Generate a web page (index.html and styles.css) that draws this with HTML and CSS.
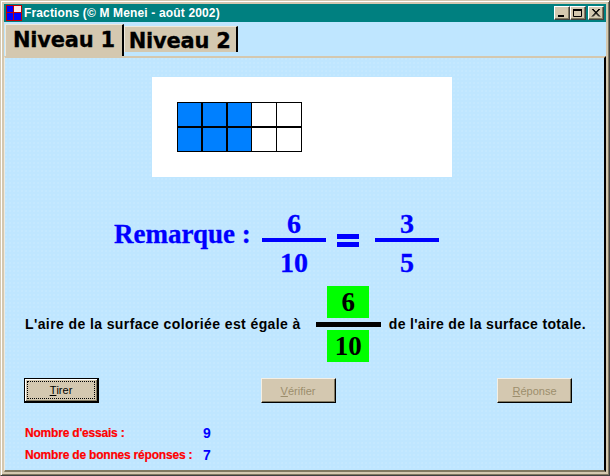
FILE: index.html
```html
<!DOCTYPE html>
<html lang="fr">
<head>
<meta charset="utf-8">
<title>Fractions</title>
<link rel="stylesheet" href="styles.css">
</head>
<body>
<div class="window">
  <header class="titlebar">
    <svg class="app-icon" width="16" height="16" viewBox="0 0 16 16">
      <rect width="16" height="16" fill="#c00000"/>
      <rect x="1" y="1" width="6" height="6" fill="#0000ff"/>
      <rect x="8" y="1" width="7" height="6" fill="#ffe8e8"/>
      <rect x="1" y="8" width="6" height="7" fill="#0000ff"/>
      <rect x="8" y="8" width="7" height="7" fill="#0000ff"/>
    </svg>
    <span class="title">Fractions (© M Menei - août 2002)</span>
    <div class="controls">
      <span class="ctl"><svg width="12" height="10" viewBox="0 0 12 10"><rect x="2" y="7" width="6" height="2" fill="#000"/></svg></span>
      <span class="ctl"><svg width="12" height="10" viewBox="0 0 12 10"><path d="M1.5 1.5h8v7h-8z" fill="none" stroke="#000"/><rect x="1" y="1" width="9" height="2" fill="#000"/></svg></span>
      <span class="ctl close"><svg width="12" height="10" viewBox="0 0 12 10"><path d="M2 1l7 7.5M3 1l7 7.5M9 1l-7 7.5M10 1l-7 7.5" stroke="#000" fill="none"/></svg></span>
    </div>
  </header>
  <nav class="tabs">
    <div class="tab active">Niveau 1</div>
    <div class="tab">Niveau 2</div>
  </nav>
  <main class="panel">
    <section class="card">
      <div class="grid">
        <i class="on"></i><i class="on"></i><i class="on last"></i><i></i><i></i>
        <i class="on"></i><i class="on"></i><i class="on last"></i><i></i><i></i>
      </div>
    </section>
    <section class="remark">
      <span class="remark-label">Remarque :</span>
      <div class="frac"><span>6</span><b></b><span>10</span></div>
      <span class="equals"></span>
      <div class="frac"><span>3</span><b></b><span>5</span></div>
    </section>
    <section class="sentence">
      <span>L'aire de la surface coloriée est égale à</span>
      <div class="answer"><span>6</span><b></b><span>10</span></div>
      <span class="tail">de l'aire de la surface totale.</span>
    </section>
    <section class="buttons">
      <button class="btn default"><span class="focus"><u>T</u>irer</span></button>
      <button class="btn off"><u>V</u>érifier</button>
      <button class="btn off"><u>R</u>éponse</button>
    </section>
    <section class="stats">
      <div class="stat"><span class="stat-label">Nombre d'essais :</span><span class="stat-value">9</span></div>
      <div class="stat"><span class="stat-label">Nombre de bonnes réponses :</span><span class="stat-value">7</span></div>
    </section>
  </main>
</div>
</body>
</html>
```
FILE: styles.css
```css
* { box-sizing: border-box; }
html, body { margin: 0; padding: 0; }
body { width: 610px; height: 476px; overflow: hidden; font-family: "Liberation Sans", Arial, sans-serif; }
.window {
  width: 610px; height: 476px; display: flex; flex-direction: column;
  background: #d4c8b0;
  border: 1px solid #404040; border-top-color: #d4c8b0; border-left-color: #d4c8b0;
  box-shadow: inset 1px 1px 0 #fff, inset -1px -1px 0 #807860;
  padding: 3px;
}
.titlebar {
  height: 18px; flex: none; background: #008080; display: flex; align-items: center;
  padding: 0 2px; color: #fff;
}
.app-icon { flex: none; margin-right: 2px; }
.title { font-weight: bold; font-size: 12px; letter-spacing: .15px; white-space: nowrap; }
.controls { margin-left: auto; display: flex; }
.ctl {
  width: 16px; height: 14px; background: #d4c8b0; display: flex; align-items: center; justify-content: center;
  border: 1px solid; border-color: #fff #404040 #404040 #fff;
  box-shadow: inset -1px -1px 0 #807860;
}
.close { margin-left: 2px; }
.tabs {
  height: 34px; flex: none; display: flex; align-items: flex-start;
  background: #bfe6ff; padding-top: 2px; padding-left: 1px;
}
.tab {
  font-family: "DejaVu Sans", sans-serif; font-weight: bold; font-size: 21px; letter-spacing: -.25px; color: #000;
  -webkit-text-stroke: .3px #000;
  background: #d4c8b0; white-space: nowrap;
  border-right: 2px solid #000; border-top: 1px solid #efe9dc; border-left: 1px solid #efe9dc;
  height: 26px; line-height: 29px; margin-top: 2px; padding: 0 5px 0 4px;
}
.tab.active { height: 32px; margin-top: 0; line-height: 30px; padding: 0 7px 0 7px; }
.panel {
  flex: 1; min-height: 0;
  background-color: #bfe6ff;
  background-image: radial-gradient(circle at 1px 1px, #c6e9ff 0.7px, transparent 0.8px);
  background-size: 4px 4px;
  border-top: 2px solid #d4c8b0; border-right: 2px solid #000; border-bottom: 2px solid #807860; border-left: 1px solid #efe9dc;
  display: flex; flex-direction: column; padding: 19px 30px 0 19px;
}
.card { width: 300px; height: 100px; flex: none; background: #fff; margin-left: 128px; padding: 25px; }
.grid {
  width: 125px; height: 50px; display: grid; grid-template-columns: 24px 24px 23px 24px 24px; grid-auto-rows: 23px; gap: 2px 1px;
  background: #000; padding: 1px;
}
.grid i { background: #fff; display: block; }
.grid i.on { background: #0080ff; border-right: 1px solid #000; }
.grid i.on.last { border-right: 0; }
.remark {
  display: flex; align-items: center; margin: 31px 0 0 90px; height: 70px; flex: none;
  color: #0000ff; font-family: "Liberation Serif", "Times New Roman", serif; font-weight: bold;
  -webkit-text-stroke: .3px #0000ff;
}
.remark-label { font-size: 27px; margin-bottom: 17px; width: 148px; white-space: nowrap; }
.frac { width: 64px; align-self: flex-start; display: flex; flex-direction: column; align-items: center; font-size: 28px; line-height: 31px; }
.frac span { height: 30px; }
.frac b { width: 64px; height: 4px; background: #0000ff; flex: none; }
.frac b + span { margin-top: 5px; }
.equals { width: 22px; height: 13px; margin: 0 16px 5px 11px; border-top: 5px solid #0000ff; border-bottom: 5px solid #0000ff; }
.sentence {
  display: flex; align-items: center; margin: 8px 0 0 1px; height: 76px; flex: none;
  font-size: 14px; font-weight: bold; color: #000; letter-spacing: .4px; white-space: nowrap;
}
.tail { letter-spacing: .33px; }
.answer {
  width: 65px; margin: 0 8px 0 15px; display: flex; flex-direction: column; align-items: center; letter-spacing: 0;
  font-family: "Liberation Serif", "Times New Roman", serif; font-size: 27px;
}
.answer span { width: 42px; height: 32px; background: #00ff00; text-align: center; line-height: 32px; }
.answer b { width: 65px; height: 5px; margin: 4px 0 3px; background: #000; flex: none; }
.buttons { display: flex; justify-content: space-between; margin-top: 16px; width: 548px; flex: none; }
.btn {
  width: 75px; height: 25px; padding: 0; background: #d4c8b0; font: 11px "Liberation Sans", Arial, sans-serif; color: #000;
  border: 1px solid; border-color: #f4efe4 #000 #000 #f4efe4; box-shadow: inset -1px -1px 0 #807860;
  display: flex; align-items: center; justify-content: center;
}
.btn.default { border: 2px solid #000; border-top-width: 1px; border-left-width: 1px; box-shadow: inset 1px 1px 0 #fff, inset -1px -1px 0 #807860; padding: 2px; }
.focus { flex: 1; align-self: stretch; display: flex; align-items: center; justify-content: center; border: 1px dotted #000; }
.btn.off { color: #9c8e6c; }
.stats { margin: 23px 0 0 1px; display: flex; flex-direction: column; gap: 8px; }
.stat { display: flex; height: 14px; align-items: center; font-size: 12px; font-weight: bold; letter-spacing: -.2px; }
.stat-label { color: #ff0000; width: 178px; white-space: nowrap; -webkit-text-stroke: .2px #ff0000; }
.stat-value { color: #0000ff; font-size: 14px; }
```
